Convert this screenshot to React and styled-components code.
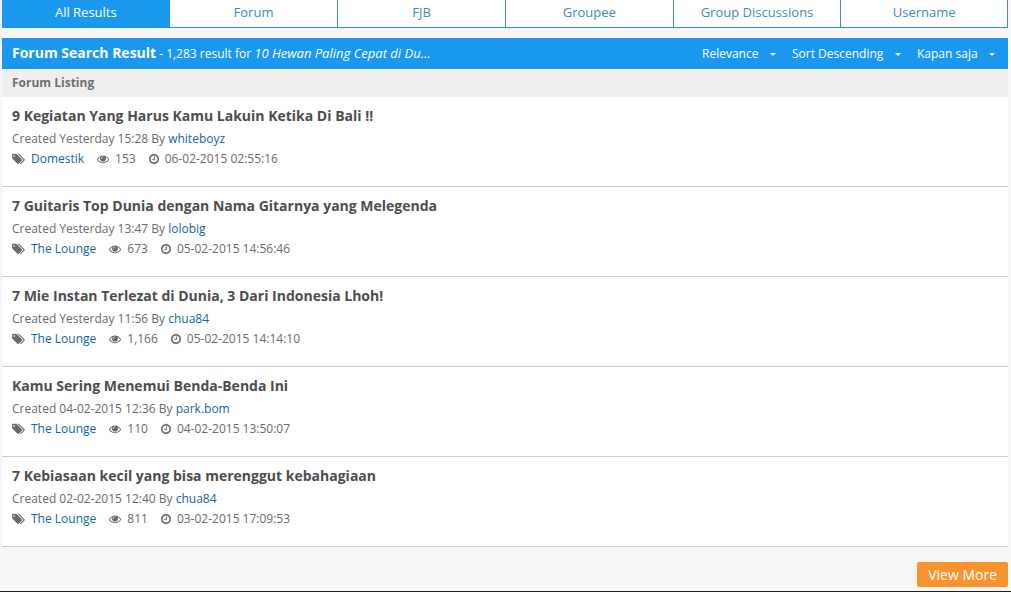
import React from 'react';
import styled, { createGlobalStyle } from 'styled-components';

const GlobalStyle = createGlobalStyle`
  * {
    box-sizing: border-box;
  }

  body {
    margin: 0;
    background: #f6f6f6;
    color: #6a6a6a;
    font-family: 'Open Sans', 'Noto Sans', sans-serif;
    font-size: 12px;
    line-height: 20px;
  }

  a {
    text-decoration: none;
  }
`;

const tabs = ['All Results', 'Forum', 'FJB', 'Groupee', 'Group Discussions', 'Username'];

const filters = [
  { label: 'Sort by', value: 'Relevance' },
  { label: 'Order', value: 'Sort Descending' },
  { label: 'Period', value: 'Kapan saja' },
];

const threads = [
  {
    title: '9 Kegiatan Yang Harus Kamu Lakuin Ketika Di Bali !!',
    created: 'Yesterday 15:28',
    author: 'whiteboyz',
    forum: 'Domestik',
    views: '153',
    updated: '06-02-2015 02:55:16',
  },
  {
    title: '7 Guitaris Top Dunia dengan Nama Gitarnya yang Melegenda',
    created: 'Yesterday 13:47',
    author: 'lolobig',
    forum: 'The Lounge',
    views: '673',
    updated: '05-02-2015 14:56:46',
  },
  {
    title: '7 Mie Instan Terlezat di Dunia, 3 Dari Indonesia Lhoh!',
    created: 'Yesterday 11:56',
    author: 'chua84',
    forum: 'The Lounge',
    views: '1,166',
    updated: '05-02-2015 14:14:10',
  },
  {
    title: 'Kamu Sering Menemui Benda-Benda Ini',
    created: '04-02-2015 12:36',
    author: 'park.bom',
    forum: 'The Lounge',
    views: '110',
    updated: '04-02-2015 13:50:07',
  },
  {
    title: '7 Kebiasaan kecil yang bisa merenggut kebahagiaan',
    created: '02-02-2015 12:40',
    author: 'chua84',
    forum: 'The Lounge',
    views: '811',
    updated: '03-02-2015 17:09:53',
  },
];

const TagsIcon = () => (
  <svg width="13" height="12" viewBox="0 0 1920 1792" fill="currentColor" aria-hidden="true">
    <path d="M448 448q0-53-37.5-90.5t-90.5-37.5-90.5 37.5-37.5 90.5 37.5 90.5 90.5 37.5 90.5-37.5 37.5-90.5zm1067 576q0 53-37 90l-491 492q-39 37-91 37-53 0-90-37l-715-716q-38-37-64.5-101t-26.5-117v-416q0-52 38-90t90-38h416q53 0 117 26.5t102 64.5l715 714q37 39 37 91zm384 0q0 53-37 90l-491 492q-39 37-91 37-36 0-59-14t-53-45l470-470q37-37 37-90 0-52-37-91l-715-714q-38-38-102-64.5t-117-26.5h224q53 0 117 26.5t102 64.5l715 714q37 39 37 91z" />
  </svg>
);

const EyeIcon = () => (
  <svg width="12" height="12" viewBox="0 0 1792 1792" fill="currentColor" aria-hidden="true">
    <path d="M1664 960q-152-236-381-353 61 104 61 225 0 185-131.5 316.5t-316.5 131.5-316.5-131.5-131.5-316.5q0-121 61-225-229 117-381 353 133 205 333.5 326.5t434.5 121.5 434.5-121.5 333.5-326.5zm-720-384q0-20-14-34t-34-14q-125 0-214.5 89.5t-89.5 214.5q0 20 14 34t34 14 34-14 14-34q0-86 61-147t147-61q20 0 34-14t14-34zm848 384q0 34-20 69-140 230-376.5 368.5t-499.5 138.5-499.5-139-376.5-368q-20-35-20-69t20-69q140-229 376.5-368t499.5-139 499.5 139 376.5 368q20 35 20 69z" />
  </svg>
);

const ClockIcon = () => (
  <svg width="10" height="12" viewBox="0 0 1536 1792" fill="currentColor" aria-hidden="true">
    <path
      stroke="currentColor"
      strokeWidth="40"
      d="M896 544v448q0 14-9 23t-23 9h-320q-14 0-23-9t-9-23v-64q0-14 9-23t23-9h224v-352q0-14 9-23t23-9h64q14 0 23 9t9 23zm416 352q0-148-73-273t-198-198-273-73-273 73-198 198-73 273 73 273 198 198 273 73 273-73 198-198 73-273zm224 0q0 209-103 385.5t-279.5 279.5-385.5 103-385.5-103-279.5-279.5-103-385.5 103-385.5 279.5-279.5 385.5-103 385.5 103 279.5 279.5 103 385.5z"
    />
  </svg>
);

const Thread = ({ title, created, author, forum, views, updated }) => (
  <ThreadItem>
    <ThreadTitle href="#thread">{title}</ThreadTitle>
    <Created>
      Created {created} By <TextLink href="#user">{author}</TextLink>
    </Created>
    <Meta>
      <MetaItem>
        <TagsIcon />
        <TextLink href="#forum">{forum}</TextLink>
      </MetaItem>
      <MetaItem>
        <EyeIcon />
        {views}
      </MetaItem>
      <MetaItem>
        <ClockIcon />
        {updated}
      </MetaItem>
    </Meta>
  </ThreadItem>
);

const App = () => (
  <>
    <GlobalStyle />
    <Page>
      <Tabs>
        {tabs.map((tab, i) => (
          <Tab key={tab} href="#tab" $active={i === 0}>
            {tab}
          </Tab>
        ))}
      </Tabs>
      <ResultBar>
        <ResultTitle>Forum Search Result</ResultTitle>
        <ResultCount>
          - 1,283 result for <Query>10 Hewan Paling Cepat di Du...</Query>
        </ResultCount>
        <Filters>
          {filters.map(({ label, value }) => (
            <Filter key={value}>
              <FilterSelect aria-label={label}>
                <option>{value}</option>
              </FilterSelect>
              <Caret />
            </Filter>
          ))}
        </Filters>
      </ResultBar>
      <ListingTitle>Forum Listing</ListingTitle>
      <ThreadList>
        {threads.map(thread => (
          <Thread key={thread.title} {...thread} />
        ))}
      </ThreadList>
      <Actions>
        <MoreButton type="button">View More</MoreButton>
      </Actions>
    </Page>
    <Footer />
  </>
);

export default App;

const Page = styled.main`
  padding: 0 3px 4px 2px;
`

const Tabs = styled.nav`
  display: grid;
  grid-template-columns: repeat(6, 1fr);
  margin-bottom: 10px;
`

const Tab = styled.a`
  height: 28px;
  padding-top: 2px;
  border-bottom: 1px solid ${props => (props.$active ? '#1998ed' : '#428bb5')};
  background: ${props => (props.$active ? '#1998ed' : '#fff')};
  color: ${props => (props.$active ? '#fff' : '#428bb5')};
  font-size: 13px;
  text-align: center;

  & + & {
    border-left: 1px solid #428bb5;
  }

  &:first-child + & {
    border-left: 0;
  }

  &:last-child {
    border-right: 1px solid #428bb5;
  }
`

const ResultBar = styled.header`
  display: flex;
  align-items: baseline;
  height: 31px;
  padding: 5px 0 0 10px;
  background: #1998ed;
  color: #fff;
`

const ResultTitle = styled.h1`
  margin: 0 3px 0 0;
  font-size: 14px;
  line-height: 20px;
`

const ResultCount = styled.span`
  white-space: nowrap;
`

const Query = styled.em`
  font-size: 13px;
`

const Filters = styled.div`
  display: flex;
  gap: 3px;
  margin-left: auto;
`

const Filter = styled.div`
  display: flex;
  position: relative;
`

const FilterSelect = styled.select`
  appearance: none;
  padding: 0 30px 0 0;
  border: 0;
  background: transparent;
  color: #fff;
  font: inherit;
  cursor: pointer;

  option {
    color: #666;
  }
`

const Caret = styled.span`
  position: absolute;
  top: 9px;
  right: 13px;
  border: 3px solid transparent;
  border-top-color: #fff;
  border-bottom: 0;
  pointer-events: none;
`

const ListingTitle = styled.h2`
  margin: 0;
  padding: 4px 10px;
  background: #efefef;
  color: #707070;
  font-size: 12px;
  line-height: 20px;
`

const ThreadList = styled.ul`
  margin: 0;
  padding: 0;
  background: #fff;
  list-style: none;
`

const ThreadItem = styled.li`
  padding: 9px 10px 17px;
  border-bottom: 1px solid #ccc;
`

const ThreadTitle = styled.a`
  display: block;
  margin-bottom: 3px;
  color: #4d4d4d;
  font-size: 14px;
  font-weight: 700;
`

const Created = styled.div``

const TextLink = styled.a`
  color: #0f67a5;
`

const Meta = styled.div`
  display: flex;
  gap: 13px;
`

const MetaItem = styled.span`
  display: flex;
  align-items: center;
  gap: 6px;
`

const Actions = styled.div`
  display: flex;
  justify-content: flex-end;
  padding-top: 15px;
`

const MoreButton = styled.button`
  height: 25px;
  padding: 0 11px;
  border: 0;
  border-radius: 2px;
  background: #f7942f;
  color: #fff;
  font-family: inherit;
  font-size: 14px;
  cursor: pointer;
`

const Footer = styled.footer`
  height: 1px;
  background: #1d1d24;
`
